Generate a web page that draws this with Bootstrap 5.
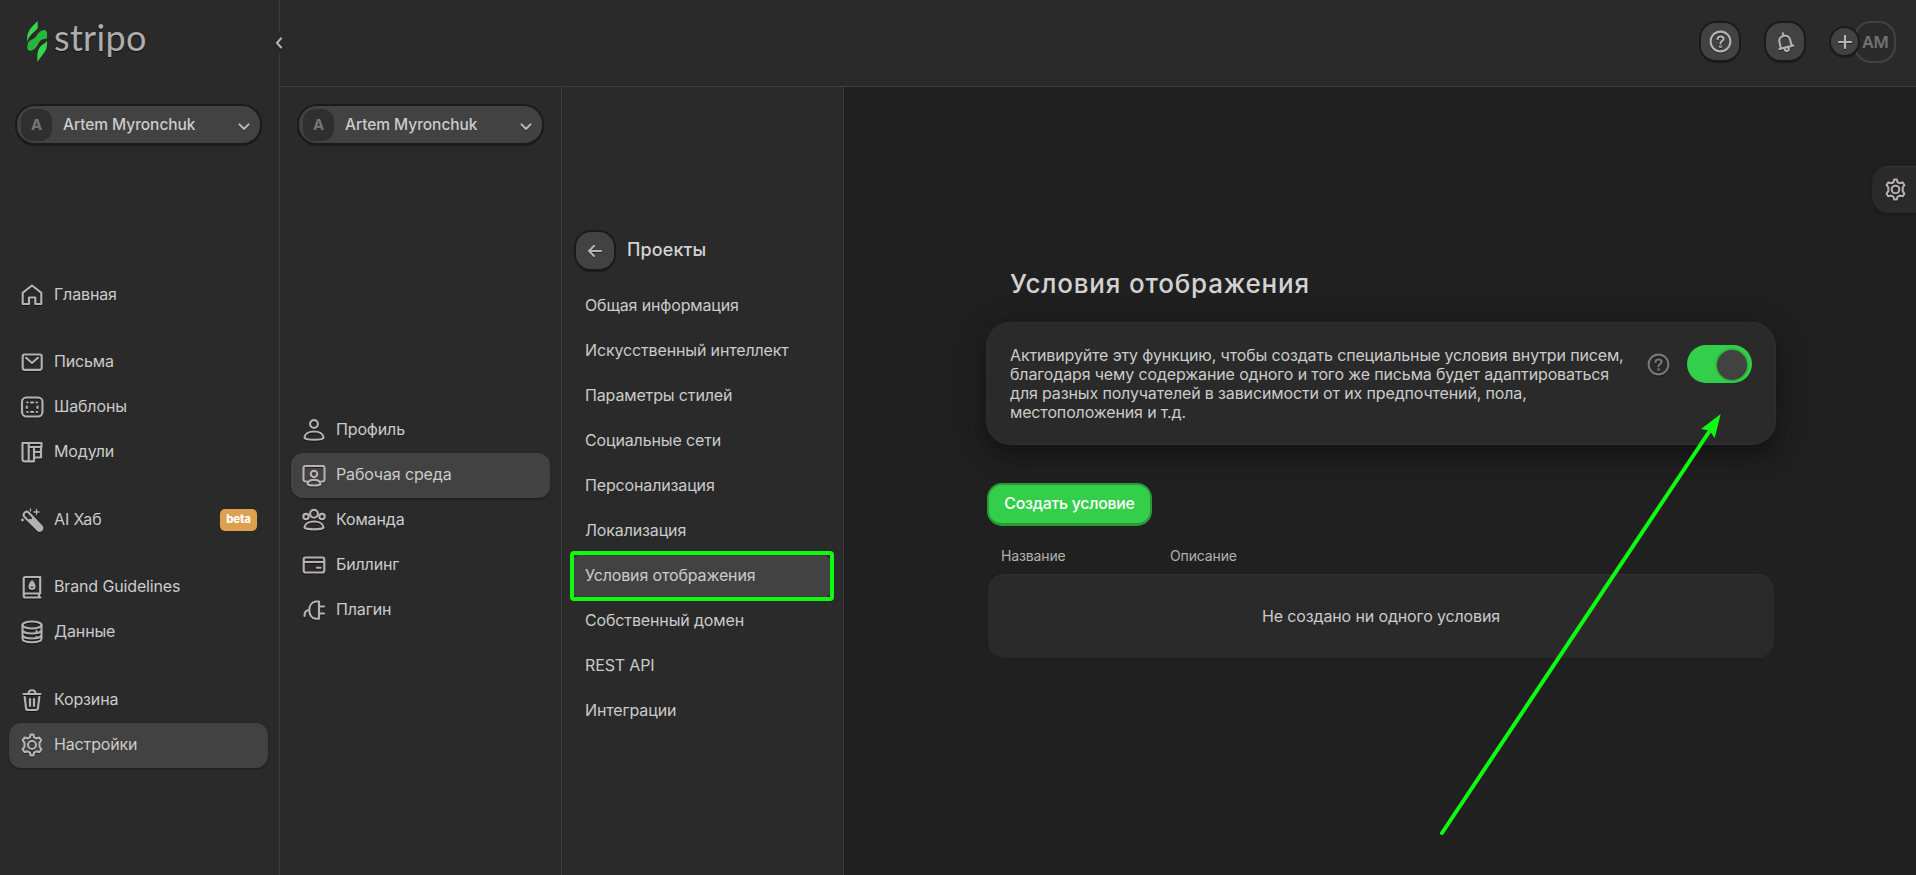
<!DOCTYPE html>
<html lang="ru" data-bs-theme="dark">
<head>
<meta charset="utf-8">
<meta name="viewport" content="width=device-width, initial-scale=1">
<title>Stripo — Условия отображения</title>
<link href="https://cdn.jsdelivr.net/npm/bootstrap@5.3.0/dist/css/bootstrap.min.css" rel="stylesheet">
<style>
body{font-family:Inter,"Liberation Sans",sans-serif;font-size:16px;line-height:19px;letter-spacing:-.14px;color:#cbcbcb;background:#202020;height:875px;overflow:hidden}
a{color:inherit;text-decoration:none}
svg{display:block;flex:none}
.ico{fill:none;stroke:#b5b3b0;stroke-width:2.15;stroke-linecap:round;stroke-linejoin:round;filter:drop-shadow(0 1px 0 rgba(0,0,0,.5))}
.side{background:#2a2a2a;border-right:1px solid #3d3d3d;flex:none}
.side-main{width:280px}
.side-sub{width:282px}
.topbar{height:87px;background:#2a2a2a;border-bottom:1px solid #3d3d3d;padding:0 20px 2px 0}
.topbar .round-btn{margin-right:23px}
.logo{height:87px;padding:21px 0 0 27px}
.logo-word{font-family:Lato,sans-serif;font-size:36px;line-height:38px;color:#adadad;letter-spacing:.3px;text-shadow:0 1px 1px #111;margin:-3px 0 0 6px}
.collapser{width:10px;height:22px;right:-6px;top:32px;background:#2a2a2a}
.picker{height:42px;width:247px;border:2px solid #1b1b1b;border-bottom-width:3px;border-radius:20px;background:#424242;margin:17px 0 0 15px;padding:0 10px 0 4px;font-weight:500;font-size:15.5px;letter-spacing:-.05px}
.sub-picker{margin-left:17px}
.picker-tile{width:31px;height:32px;border-radius:12px;background:#2f2f2f;color:#777;font-weight:700;margin-right:11px;font-size:15px}
.menu a{height:45px;display:flex;align-items:center;margin:0 11px 0 9px;padding-left:11px;border-radius:12px;padding-bottom:2px}
.menu a .ico{margin:1px 10px 0 0}
.menu a.on{background:#424242;box-shadow:0 1px 2px #1c1c1c}
.menu .gap-sm{margin-top:22px}
.menu .gap-lg{margin-top:23px}
.main-menu{margin-top:127px}
.sub-menu{margin-top:262px}
.sub-menu a{margin-left:11px}
.beta{background:#dca04f;color:#fff;font-size:11.3px;font-weight:800;width:37px;height:22px;border-radius:5px;line-height:20px;text-align:center;margin:1px 11px 0 auto}
.round-btn{width:42px;height:42px;border:2px solid #1b1b1b;border-bottom-width:3px;border-radius:17px;background:#424242}
.proj-head{margin:143px 0 0 12px;height:42px}
.proj-head h2{font-size:18px;font-weight:500;margin:0 0 3px 11px;color:#d2d2d2;letter-spacing:.1px}
.proj-menu{margin-top:12px}
.proj-menu a{padding-left:14px}
.marked{position:relative}
.marked::after{content:"";position:absolute;inset:-3px -2px -2px -1px;border:4px solid #10f910;border-radius:4px}
.plus{width:31px;height:32px;border:2px solid #1b1b1b;border-bottom-width:3px;border-radius:50%;background:#424242;margin-right:-6px;z-index:1}
.avatar{width:42px;height:42px;border:2px solid #424242;border-radius:17px;color:#727272;font-weight:600;font-size:16.5px;letter-spacing:-.5px}
.work{position:relative}
.gear-tab{position:absolute;right:0;top:79px;width:44px;height:47px;border-radius:17px 0 0 17px;background:#2a2a2a;border-top:1px solid #333;box-shadow:0 2px 4px #1a1a1a;padding:0 0 2px 12px}
.content{width:790px;margin:181px 0 0 142px}
.content h1{font-size:26px;font-weight:500;line-height:32px;margin:0 0 22px 24px;letter-spacing:.8px;color:#d2d2d2}
.notice{height:123px;border-radius:24px;background:#2a2a2a;border:1px solid #2f2f2f;box-shadow:0 12px 20px rgba(0,0,0,.28),0 6px 36px rgba(0,0,0,.2);padding:22px 23px 0}
.notice p{margin:1px 0 0;flex:1;white-space:nowrap}
.help-dim{stroke:#777;margin:8px 17px 0 0}
.toggle{width:65px;height:38px;border-radius:19px;background:#33cf4a;padding:5px 5px 0 0}
.toggle i{width:30px;height:30px;border-radius:50%;background:#424242;box-shadow:0 0 2px 1px #2b9a3c}
.btn-create{width:165px;height:43px;margin:38px 0 0 1px;border:2px solid #2a9a38;border-bottom-width:3px;border-radius:15px;background:#33cf4a;color:#fff;font-weight:500;padding:0;font-size:15.8px;letter-spacing:-.22px;line-height:36px}
.cols{margin:20px 0 9px 15px;font-size:14px;color:#b3b1ae}
.cols span:first-child{width:169px}
.empty{height:84px;margin:0 2px;background:#2a2a2a;border-top:1px solid #313131;border-radius:17px}
.arrow{position:absolute;left:1436px;top:408px}
</style>
</head>
<body class="d-flex">
<svg width="0" height="0" class="position-absolute"><defs>
<symbol id="gear" viewBox="0 0 24 24"><path d="M10.6 1.600h2.800l.7 2.800 2.200 1.100 3-.9 2 2.800-1.800 2.500v3.800l1.800 2.700-1.800 2.700-3.200-.7-2.200 1.200-.7 2.800h-2.800l-.8-2.800-2.200-1.200-3.100.7-1.800-2.700 1.800-2.700V9.900l-1.800-2.500 1.900-2.800 3.100.9 2.200-1.100z"/><circle cx="12" cy="12" r="4"/></symbol>
<symbol id="help" viewBox="0 0 24 24"><circle cx="12" cy="12" r="10.300"/><path d="M9 9.600c0-4 6.200-3.600 6.200-.2 0 2.300-3.200 2-3.200 4.600"/><circle cx="12" cy="17.200" r=".5"/></symbol>
</defs></svg>

<aside class="side side-main position-relative">
  <div class="logo d-flex">
    <svg width="21" height="41" viewBox="0 0 21 41"><path fill="#35d64c" d="M10.700 0v7C9 10 1.500 14 .5 21-.8 12 2 8 10.700 0z"/><path fill="#27b638" d="M1.300 21.500C3 18.500 7 18.500 9 15.500c3-4.500 5-6.500 8.500-6.500 3 0 2.800 4 2.500 7.500-.4 2-1.500 1-4 1.700-3.500 1-4 3.800-6 6.800-2 4-6 5.500-8.500 4.500-1.500-1.500-1.500-5-.2-8z"/><path fill="#35d64c" d="M20 20c.3 9-1 9-9.700 21v-7c.4-3 .7-5 2.700-8s5-3 7-6z"/></svg>
    <span class="logo-word">stripo</span>
  </div>
  <div class="collapser position-absolute d-flex align-items-center"><svg class="ico" width="8" height="12" viewBox="0 0 8 12"><path d="M6 1.500 2 6l4 4.500"/></svg></div>
  <div class="picker d-flex align-items-center"><span class="picker-tile d-flex align-items-center justify-content-center">A</span>Artem Myronchuk<svg class="ico ms-auto mt-1" width="12" height="8" viewBox="0 0 12 8"><path d="m1.500 1.500 4.500 4.500 4.500-4.500"/></svg></div>
  <nav class="menu main-menu">
    <a href="#"><svg class="ico" width="24" height="24"><path d="M2.700 9.800 12 2.500l9.300 7.300V21h-6v-6.500H9V21H2.700z"/></svg>Главная</a>
    <a href="#" class="gap-sm"><svg class="ico" width="24" height="24"><rect x="2.700" y="4.500" width="19" height="15.300" rx="2"/><path d="m6 7.800 6 5.200 6-5.200"/></svg>Письма</a>
    <a href="#"><svg class="ico" width="24" height="24"><rect x="2" y="2.500" width="20.500" height="19" rx="4.500"/><path d="M7.200 7.500h.4m3.500 0h2m3.500 0h.4M7.200 17h.4m3.500 0h2m3.500 0h.4M6.800 11.500v1.500M17.500 11.500v1.500"/></svg>Шаблоны</a>
    <a href="#"><svg class="ico" width="24" height="24"><path d="M2.500 3h6.200v18.300H4.500q-2 0-2-2zM8.700 3h12.800v4H8.700M14 7v10.500h7V7m-7 5h7M9 21.300h5v-4"/></svg>Модули</a>
    <a href="#" class="gap-lg"><svg class="ico" width="24" height="24"><path d="M4 5.500q2-3 4.500-1L22 18.800q1 2.500-1.500 4-1.500.2-3-1L4.500 9Q3 7.500 4 5.500z"/><path d="M12 12l8.500 9M13 11l8 8M10 12l9 10" stroke-width="2.500"/><path stroke-width="1.300" d="M16.500 1.500v5M14 4h5M10.500 1v2M2.500 11v2M1.500 12h2"/></svg>AI Хаб<span class="beta">beta</span></a>
    <a href="#" class="gap-sm"><svg class="ico" width="24" height="24"><path d="M3.700 19.500V3.500q0-1.500 1.500-1.500h15v16.500H5.500q-1.800 0-1.800 2.200 0 1.800 1.800 1.800h15M19 19v3"/><path d="M12 6.500c-4 5-2.500 7.500 0 7.500s4-2.500 0-7.500zM12 10v1"/></svg>Brand Guidelines</a>
    <a href="#"><svg class="ico" width="24" height="24"><ellipse cx="12" cy="5" rx="9.500" ry="3.500"/><path d="M2.500 5v13.500c0 5 19 5 19 0V5M2.500 10.500c2 4 17 4 19 0M2.500 15.500c2 4 17 4 19 0M16.500 11v.3M16.500 17v.3"/></svg>Данные</a>
    <a href="#" class="gap-lg"><svg class="ico" width="24" height="24"><path d="M3.500 6h17M8.500 6c0-5 7-5 7 0M4.700 9l1.300 11q.2 2 2 2h8q1.800 0 2-2l1.300-11M10 11v7M14 11v7"/></svg>Корзина</a>
    <a href="#" class="on"><svg class="ico" width="24" height="24"><use href="#gear"/></svg>Настройки</a>
  </nav>
</aside>

<div class="flex-grow-1 d-flex flex-column">
  <header class="topbar d-flex align-items-center justify-content-end">
    <a href="#" class="round-btn d-flex align-items-center justify-content-center"><svg class="ico" width="23" height="23"><use href="#help"/></svg></a>
    <a href="#" class="round-btn d-flex align-items-center justify-content-center"><svg class="ico" width="22" height="22" viewBox="0 0 22 22"><g transform="rotate(-14 11 11)"><path d="M5.500 16.500V10c0-7 11-7 11 0v6.500M4 16.500h14M11 2v2M9 18c0 3 4 3 4 0"/></g></svg></a>
    <a href="#" class="plus d-flex align-items-center justify-content-center"><svg class="ico" width="14" height="14"><path d="M7 1v12M1 7h12"/></svg></a>
    <span class="avatar d-flex align-items-center justify-content-center">AM</span>
  </header>
  <div class="d-flex flex-grow-1">
    <aside class="side side-sub">
      <div class="picker d-flex align-items-center sub-picker"><span class="picker-tile d-flex align-items-center justify-content-center">A</span>Artem Myronchuk<svg class="ico ms-auto mt-1" width="12" height="8" viewBox="0 0 12 8"><path d="m1.500 1.500 4.500 4.500 4.500-4.500"/></svg></div>
      <nav class="menu sub-menu">
        <a href="#"><svg class="ico" width="24" height="24"><circle cx="12" cy="6" r="3.900"/><path d="M2.500 19.500c1-8 18-8 19 0 0 3-19 3-19 0z"/></svg>Профиль</a>
        <a href="#" class="on"><svg class="ico" width="24" height="24"><path d="M5 18.500H3.500q-2 0-2-2V5q0-2 2-2h17q2 0 2 2v11.500q0 2-2 2H19"/><circle cx="12" cy="11" r="3.200"/><path d="M5.500 21c1-5.500 12-5.500 13 0 0 2-13 2-13 0z"/></svg>Рабочая среда</a>
        <a href="#"><svg class="ico" width="24" height="24"><circle cx="12" cy="5.800" r="3.900"/><circle cx="4" cy="8.500" r="2.700"/><circle cx="20" cy="8.500" r="2.700"/><path d="M2.500 19.500c1-8 18-8 19 0 0 2.500-19 2.500-19 0z"/></svg>Команда</a>
        <a href="#"><svg class="ico" width="24" height="24"><rect x="1.700" y="4.500" width="20.600" height="15" rx="2"/><path d="M2 9h20M15 14.700h3.500"/></svg>Биллинг</a>
        <a href="#"><svg class="ico" width="24" height="24"><path d="M17 3.500v17.200h-3c-9-1-9-16 0-17.200zM17.500 8.500H22M17.500 15.500H22M2.500 18c0-4 2-6 5-6"/></svg>Плагин</a>
      </nav>
    </aside>
    <aside class="side side-sub">
      <div class="proj-head d-flex align-items-center"><a href="#" class="round-btn d-flex align-items-center justify-content-center"><svg class="ico" width="16" height="14"><path d="M14 7H2m5-5L2 7l5 5"/></svg></a><h2>Проекты</h2></div>
      <nav class="menu proj-menu">
        <a href="#">Общая информация</a>
        <a href="#">Искусственный интеллект</a>
        <a href="#">Параметры стилей</a>
        <a href="#">Социальные сети</a>
        <a href="#">Персонализация</a>
        <a href="#">Локализация</a>
        <a href="#" class="on marked">Условия отображения</a>
        <a href="#">Собственный домен</a>
        <a href="#">REST API</a>
        <a href="#">Интеграции</a>
      </nav>
    </aside>
    <main class="work flex-grow-1">
      <a href="#" class="gear-tab d-flex align-items-center"><svg class="ico" width="23" height="23"><use href="#gear"/></svg></a>
      <section class="content">
        <h1>Условия отображения</h1>
        <div class="notice d-flex align-items-start">
          <p>Активируйте эту функцию, чтобы создать специальные условия внутри писем,<br>благодаря чему содержание одного и того же письма будет адаптироваться<br>для разных получателей в зависимости от их предпочтений, пола,<br>местоположения и т.д.</p>
          <svg class="ico help-dim" width="23" height="23"><use href="#help"/></svg>
          <span class="toggle d-flex justify-content-end"><i></i></span>
        </div>
        <button class="btn btn-create">Создать условие</button>
        <div class="cols d-flex"><span>Название</span><span>Описание</span></div>
        <div class="empty d-flex align-items-center justify-content-center">Не создано ни одного условия</div>
      </section>
    </main>
  </div>
</div>
<svg class="arrow" width="292" height="430"><path d="M6 425 273 24" stroke="#10f910" stroke-width="4" fill="none" stroke-linecap="round"/><path d="M284.700 6 265 21l8.500 1.500 5.200 7.500z" fill="#10f910"/></svg>
<script src="https://cdn.jsdelivr.net/npm/bootstrap@5.3.0/dist/js/bootstrap.bundle.min.js"></script>
</body>
</html>
